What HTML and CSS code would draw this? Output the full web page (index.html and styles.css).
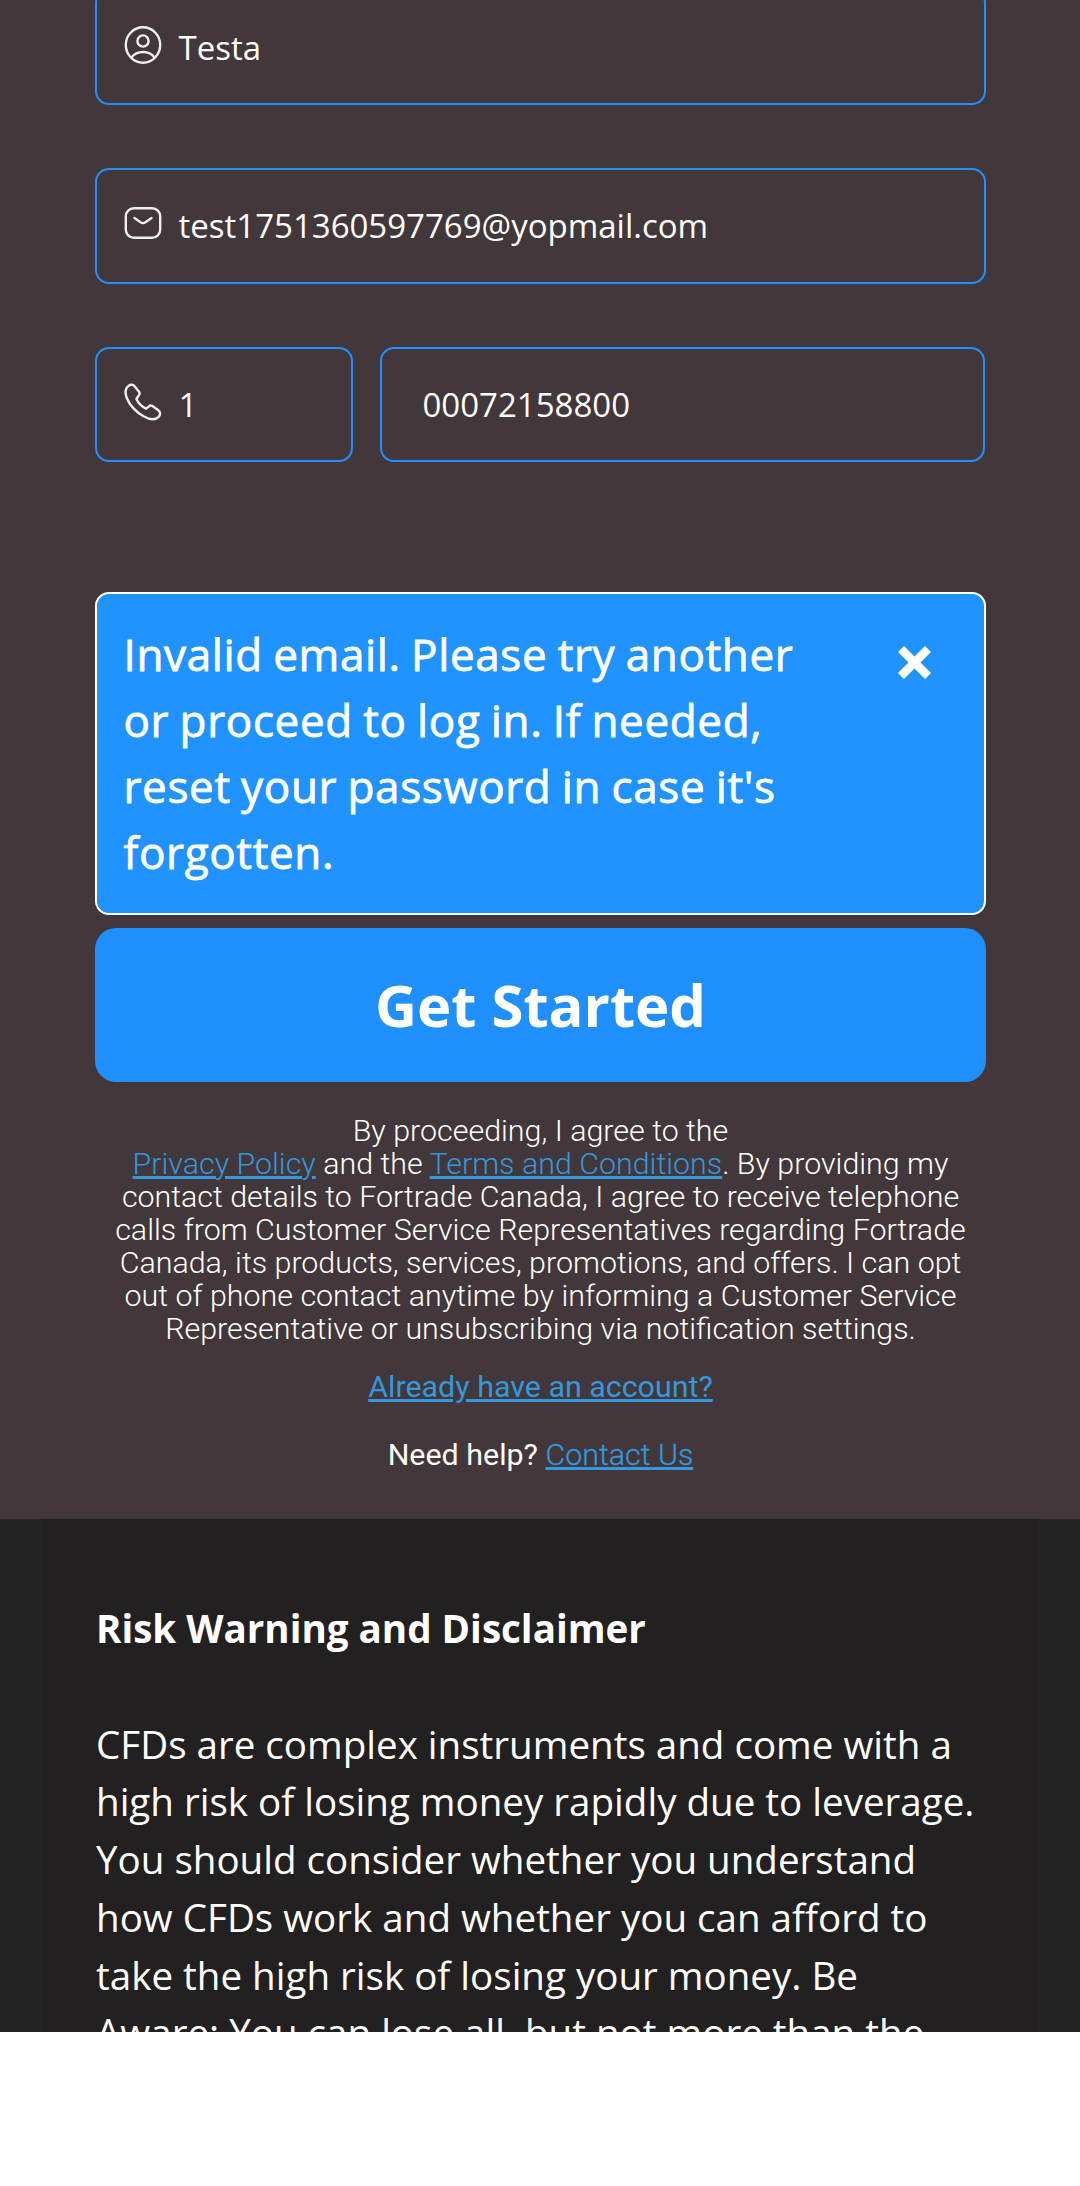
FILE: index.html
```html
<!DOCTYPE html>
<html lang="en">
<head>
<meta charset="utf-8">
<title>Sign up</title>
<meta name="viewport" content="width=device-width">
<link rel="stylesheet" href="styles.css">
</head>
<body>
<div class="screen">
<main class="signup">
  <form class="form">
    <div class="field">
      <svg class="icon" viewBox="0 0 38 40" fill="none" stroke="currentColor" stroke-width="2.4"><ellipse cx="19" cy="20" rx="17.2" ry="17.7"/><circle cx="19" cy="16" r="5.600"/><path d="M7.400 32.600C10 29 14 27 19 27s9 2 11.600 5.600"/></svg>
      <span class="value">Testa</span>
    </div>
    <div class="field email">
      <svg class="icon" viewBox="0 0 38 40" fill="none" stroke="currentColor" stroke-width="2.4" stroke-linecap="round"><rect x="1.800" y="5.200" width="34.400" height="29.600" rx="8"/><path d="M10.500 15l6 4.300q2.500 1.600 5 0l6-4.300"/></svg>
      <span class="value">test1751360597769@yopmail.com</span>
    </div>
    <div class="phone">
      <div class="field code">
        <svg class="icon" viewBox="0 0 38 40" fill="none" stroke="currentColor" stroke-width="2.4" stroke-linejoin="round"><path d="M4.500 3.900C7 2 9.500 2.600 11 4.700l4 5.100c.9 1.200.8 2.400-.2 3.500L12.400 17c2 4.200 5.500 7.700 9.700 9.700l2.900-2.400c1-1 2-1.100 3.400-.2L34 28c2.600 1.900 2.800 4.300.6 6.800C31.500 38 26.500 38.200 20 34.500 12 30 5.800 23.500 2.800 16 1 11.200 1 6.500 4.500 3.900z"/></svg>
        <span class="value">1</span>
      </div>
      <div class="field number"><span class="value">00072158800</span></div>
    </div>
    <div class="alert">
      <p class="message">Invalid email. Please try another or proceed to log in. If needed, reset your password in case it's forgotten.</p>
      <svg class="close" viewBox="0 0 33 33" stroke="currentColor" stroke-width="8.500"><path d="M3 3l27 27M30 3l-27 27"/></svg>
    </div>
    <button class="submit" type="button">Get Started</button>
  </form>
  <p class="consent">By proceeding, I agree to the<br><a href="#">Privacy Policy</a> and the <a href="#">Terms and Conditions</a>. By providing my<br>contact details to Fortrade Canada, I agree to receive telephone<br>calls from Customer Service Representatives regarding Fortrade<br>Canada, its products, services, promotions, and offers. I can opt<br>out of phone contact anytime by informing a Customer Service<br>Representative or unsubscribing via notification settings.</p>
  <p class="login"><a href="#">Already have an account?</a></p>
  <p class="help">Need help? <a href="#">Contact Us</a></p>
</main>
<footer class="footer">
  <div class="risk">
    <h2>Risk Warning and Disclaimer</h2>
    <p>CFDs are complex instruments and come with a high risk of losing money rapidly due to leverage. You should consider whether you understand how CFDs work and whether you can afford to take the high risk of losing your money. Be Aware: You can lose all, but not more than the</p>
  </div>
</footer>
</div>
</body>
</html>
```
FILE: styles.css
```css
*{box-sizing:border-box}
body{margin:0;background:#fff;color:#fff;font-family:"Open Sans",sans-serif}
p,h2{margin:0}
.screen{height:2032px;overflow:hidden}
.signup{height:1519px;overflow:hidden;background:#42373b;padding:0 94px 0 95px}
.form{display:flex;flex-direction:column;margin-top:-11px}
.field{display:flex;align-items:center;height:116px;margin-bottom:63px;padding-left:26.500px;border:2px solid #2091ff;border-radius:14px;font-size:33px}
.email{padding-bottom:2px}
.icon{width:38px;height:40px;margin:0 17px 5px 0;color:#eee}
.phone{display:flex;gap:27px;padding-right:1px;margin-bottom:130px}
.phone .field{height:115px;margin-bottom:0}
.code{width:258px}
.phone .number{flex:1;padding-left:40.500px}
.alert{display:flex;justify-content:space-between;height:323px;padding:26.500px 53px 0 26.500px;border:2px solid #fff;border-radius:14px;background:#2093ff}
.message{width:690px;font-size:44px;line-height:66px;letter-spacing:.64px;word-spacing:-1.700px;-webkit-text-stroke:.8px #fff}
.close{width:33px;height:33px;margin-top:25.500px}
.submit{height:154px;margin-top:13px;padding:0 0 2px;border:0;border-radius:21px;background:#208fff;color:#fff;font:700 58px "Open Sans",sans-serif}
.consent,.login,.help{font-family:Roboto,sans-serif;font-size:30.400px;line-height:33px;text-align:center}
.consent{margin-top:32px;font-weight:300;white-space:nowrap}
.login{margin-top:25px}
.help{margin-top:35px}
.help a{font-weight:300;-webkit-text-stroke:.3px #3498db}
a{color:#3498db;text-decoration:underline;text-decoration-thickness:3px;text-underline-offset:2px}
.footer{height:513px;padding:0 41px;background:#242424}
.risk{height:513px;padding:81px 50px 0 55px;background:#232021;font-size:38.550px;line-height:57.750px}
.risk h2{margin-bottom:57.750px;font-size:inherit;font-weight:700}
```
